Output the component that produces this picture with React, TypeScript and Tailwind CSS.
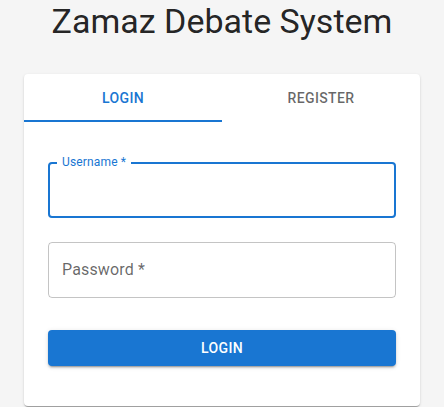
import React from "react";

export default function App() {
  return (
    <main className="min-h-screen bg-[#f5f5f5] px-6 font-['Roboto',sans-serif] text-[rgba(0,0,0,0.87)]">
      <h1 className="text-center text-[34px] leading-[42px] font-normal tracking-normal">
        Zamaz Debate System
      </h1>
      <div className="mt-8 rounded bg-white shadow-[0_2px_1px_-1px_rgba(0,0,0,0.2),0_1px_1px_0_rgba(0,0,0,0.14),0_1px_3px_0_rgba(0,0,0,0.12)]">
        <div className="flex">
          <button className="relative h-12 flex-1 text-sm font-medium uppercase tracking-[0.4px] text-[#1976d2]">
            Login
            <span className="absolute bottom-0 left-0 h-[2px] w-full bg-[#1976d2]" />
          </button>
          <button className="h-12 flex-1 text-sm font-medium uppercase tracking-[0.4px] text-[rgba(0,0,0,0.6)]">
            Register
          </button>
        </div>
        <form className="flex flex-col px-6 pt-6 pb-10">
          <div className="relative mt-4 mb-2 h-14 rounded border-2 border-[#1976d2]">
            <span className="absolute -top-[9px] left-[7px] bg-white px-[5px] text-xs leading-[14px] tracking-[0.15px] text-[#1976d2]">
              Username *
            </span>
          </div>
          <div className="mt-4 mb-2 flex h-14 items-center rounded border border-[rgba(0,0,0,0.23)] px-[13px]">
            <span className="text-base tracking-[0.15px] text-[rgba(0,0,0,0.6)]">Password *</span>
          </div>
          <button
            type="button"
            className="mt-6 h-9 w-full rounded bg-[#1976d2] text-sm font-medium uppercase tracking-[0.4px] text-white shadow-[0_3px_1px_-2px_rgba(0,0,0,0.2),0_2px_2px_0_rgba(0,0,0,0.14),0_1px_5px_0_rgba(0,0,0,0.12)]"
          >
            Login
          </button>
        </form>
      </div>
    </main>
  );
}
